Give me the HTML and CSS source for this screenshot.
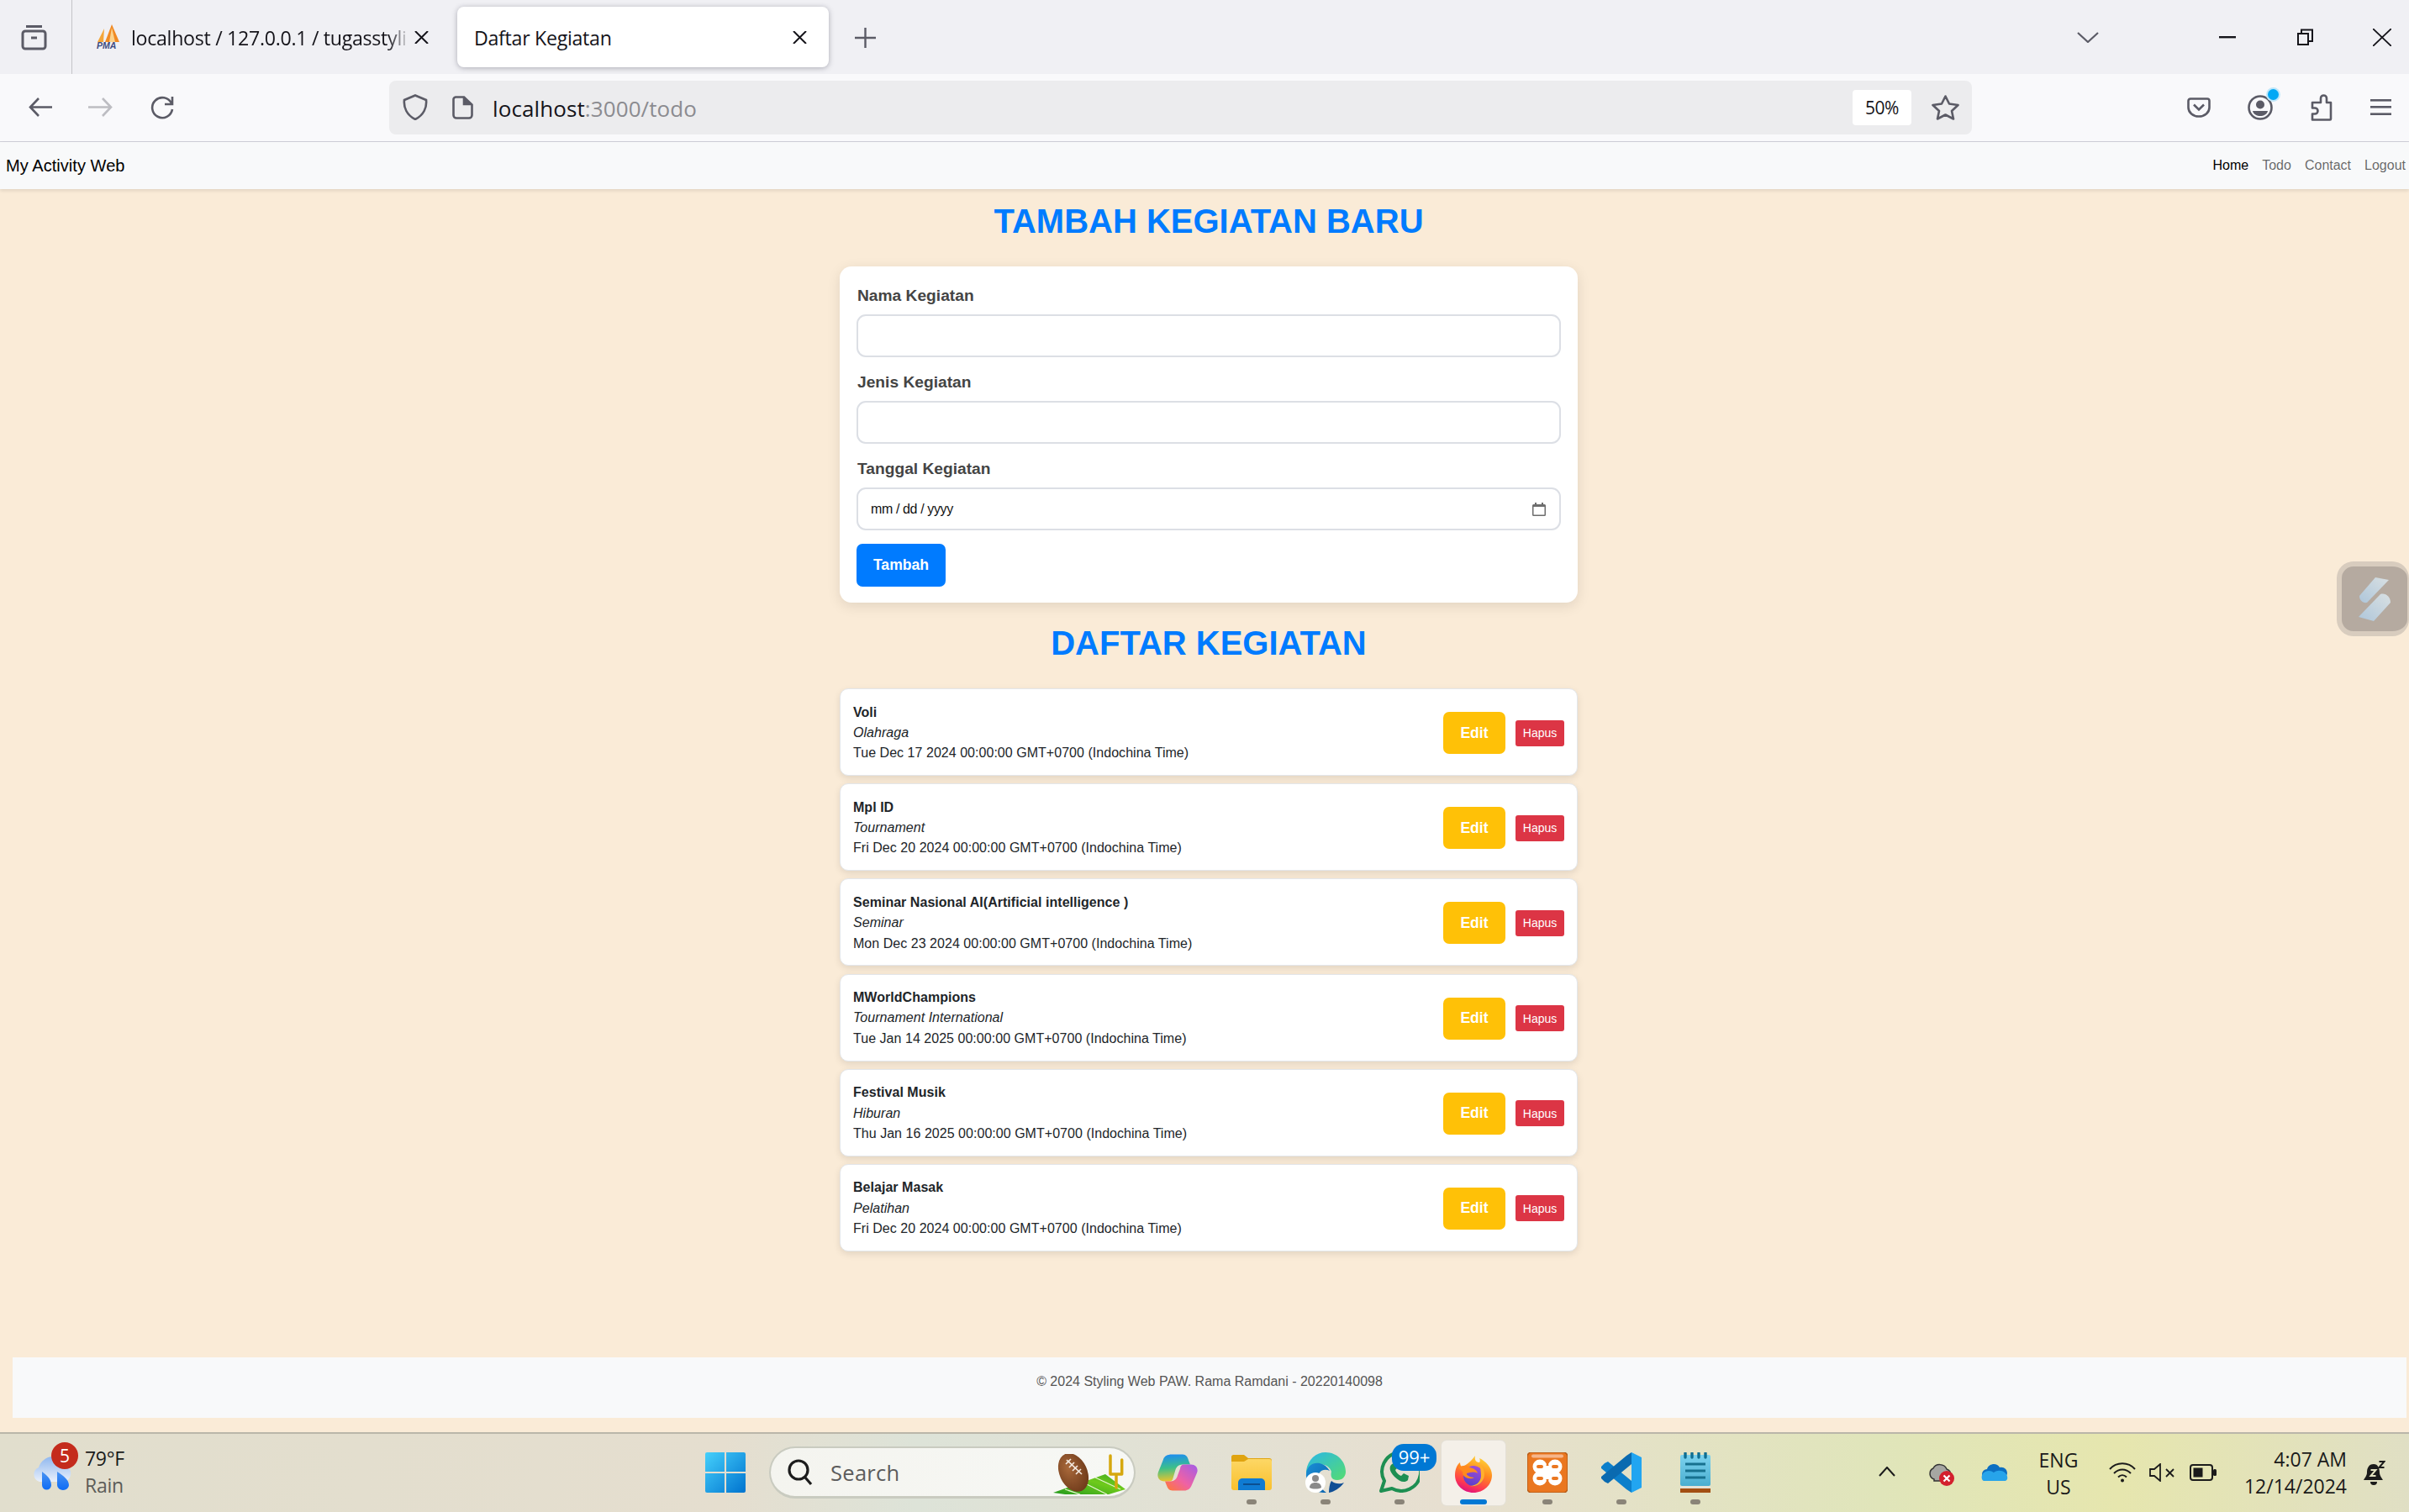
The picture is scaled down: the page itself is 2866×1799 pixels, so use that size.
FILE: index.html
```html
<!DOCTYPE html>
<html lang="id">
<head>
<meta charset="utf-8">
<title>Daftar Kegiatan</title>
<link rel="stylesheet" href="styles.css">
</head>
<body>
<div class="tabstrip">
  <svg class="ic-tabs" viewBox="0 0 31 31" fill="none" stroke="#5b5b66" stroke-width="3"><path d="M6 2.500h19"/><rect x="2" y="8" width="27" height="21" rx="3"/><path d="M12 16h7"/></svg>
  <div class="tab-sep"></div>
  <div class="tab">
    <svg class="ic-pma" viewBox="0 0 31 30"><path d="M2 21 10 5l-1 16z" fill="#f4a63a"/><path d="M11 21 19 0l9 21z" fill="#f08a24"/><path d="M16 21 19 4l4 17z" fill="#fbd38d"/><text x="1" y="29" class="pma-text">PMA</text></svg>
    <span class="tab-title tab-title-fade">localhost / 127.0.0.1 / tugasstyli</span>
    <svg class="ic-x" viewBox="0 0 17 15" stroke="#15141a" stroke-width="2" fill="none"><path d="M1 0l15 15M16 0 1 15"/></svg>
  </div>
  <div class="tab tab-active">
    <span class="tab-title">Daftar Kegiatan</span>
    <svg class="ic-x" viewBox="0 0 17 15" stroke="#15141a" stroke-width="2" fill="none"><path d="M1 0l15 15M16 0 1 15"/></svg>
  </div>
  <svg class="ic-plus" viewBox="0 0 25 24" stroke="#5b5b66" stroke-width="2.400" fill="none"><path d="M12.500 0v24M0 12h25"/></svg>
  <svg class="ic-chev" viewBox="0 0 26 13" stroke="#5b5b66" stroke-width="2.200" fill="none"><path d="M1 1l12 11L25 1"/></svg>
  <svg class="ic-min" viewBox="0 0 20 3"><rect width="20" height="2.400" fill="#15141a"/></svg>
  <svg class="ic-restore" viewBox="0 0 19 20" stroke="#15141a" stroke-width="2" fill="none"><rect x="1" y="6" width="12" height="13"/><path d="M5 6V1.500h13V15h-5"/></svg>
  <svg class="ic-close" viewBox="0 0 22 21" stroke="#15141a" stroke-width="1.800" fill="none"><path d="M0 0l22 21M22 0 0 21"/></svg>
</div>

<div class="toolbar">
  <svg class="ic-back" viewBox="0 0 28 23" stroke="#5b5b66" stroke-width="2.600" fill="none"><path d="M28 11.500H2M12 1 2 11.500 12 22"/></svg>
  <svg class="ic-fwd" viewBox="0 0 30 23" stroke="#bdbdc2" stroke-width="2.600" fill="none"><path d="M0 11.500h27M17 1l10 10.500L17 22"/></svg>
  <svg class="ic-reload" viewBox="0 0 30 28" stroke="#5b5b66" stroke-width="2.600" fill="none"><path d="M26 9A12 12 0 1 0 27 16"/><path d="M27 1v9h-9"/></svg>
  <div class="urlbar">
    <svg class="ic-shield" viewBox="0 0 30 31" stroke="#5b5b66" stroke-width="2.600" fill="none"><path d="M15 1.500 28 7c1 9-3 18-13 23C5 25 1 16 2 7z"/></svg>
    <svg class="ic-page" viewBox="0 0 25 28" stroke="#5b5b66" stroke-width="2.600" fill="none"><path d="M4 1.500h10l9.500 9V23a3.500 3.500 0 0 1-3.500 3.500H5A3.500 3.500 0 0 1 1.500 23V4A3 3 0 0 1 4 1.500z"/><path d="M14 1.500V10h9" fill="#5b5b66"/></svg>
    <span class="url"><span class="url-host">localhost</span>:3000/todo</span>
    <span class="zoom-pill">50%</span>
    <svg class="ic-star" viewBox="0 0 33 30" stroke="#5b5b66" stroke-width="2.600" fill="none" stroke-linejoin="round"><path d="M16.500 1.500 21 10.500l10.500 1.500-7.500 7 2 9.500-9.500-5-9.500 5 2-9.500-7.500-7L12 10.500z"/></svg>
  </div>
  <svg class="ic-pocket" viewBox="0 0 28 24" stroke="#5b5b66" stroke-width="2.600" fill="none"><path d="M4 1.500h20A2.500 2.500 0 0 1 26.500 4v8a12.500 10.500 0 0 1-25 0V4A2.500 2.500 0 0 1 4 1.500z"/><path d="M8 8.500l6 6 6-6"/></svg>
  <div class="account">
    <svg class="ic-account" viewBox="0 0 30 30"><circle cx="15" cy="15" r="13.500" fill="none" stroke="#5b5b66" stroke-width="2.600"/><circle cx="15" cy="11.500" r="5" fill="#5b5b66"/><path d="M6 19h18c-1 4-5 6-9 6s-8-2-9-6z" fill="#5b5b66"/></svg>
    <span class="account-dot"></span>
  </div>
  <svg class="ic-puzzle" viewBox="0 0 27 32" stroke="#5b5b66" stroke-width="2.600" fill="none" stroke-linejoin="round"><path d="M13 10V5a3.500 3.500 0 0 1 7 0v5h5v19.500a1 1 0 0 1-1 1H3v-7h3a3.500 3.500 0 0 0 0-7H3V10z"/></svg>
  <svg class="ic-menu" viewBox="0 0 25 19" fill="#5b5b66"><rect width="25" height="2.600"/><rect y="8" width="25" height="2.600"/><rect y="16.400" width="25" height="2.600"/></svg>
</div>

<nav class="navbar">
  <span class="brand">My Activity Web</span>
  <div class="nav-links">
    <a class="nav-link nav-current">Home</a>
    <a class="nav-link">Todo</a>
    <a class="nav-link">Contact</a>
    <a class="nav-link">Logout</a>
  </div>
</nav>

<main class="main">
  <div class="container">
    <h1 class="title">TAMBAH KEGIATAN BARU</h1>
    <form class="form-card">
      <label class="label">Nama Kegiatan</label>
      <input class="field" type="text">
      <label class="label">Jenis Kegiatan</label>
      <input class="field" type="text">
      <label class="label">Tanggal Kegiatan</label>
      <div class="field field-date">
        <span>mm / dd / yyyy</span>
        <svg class="ic-cal" viewBox="0 0 16 16"><path d="M3 0h2v2h6V0h2v2h1.500A1.500 1.500 0 0 1 16 3.500v11a1.500 1.500 0 0 1-1.500 1.500h-13A1.500 1.500 0 0 1 0 14.500v-11A1.500 1.500 0 0 1 1.500 2H3zM1.500 5v9.500h13V5z" fill="#6d6d6d"/></svg>
      </div>
      <button class="btn-add" type="button">Tambah</button>
    </form>
    <h2 class="title title-list">DAFTAR KEGIATAN</h2>
    <ul class="list">
      <li class="item"><div class="item-text"><strong>Voli</strong><em>Olahraga</em><span>Tue Dec 17 2024 00:00:00 GMT+0700 (Indochina Time)</span></div><button class="btn-edit" type="button">Edit</button><button class="btn-del" type="button">Hapus</button></li>
      <li class="item"><div class="item-text"><strong>Mpl ID</strong><em>Tournament</em><span>Fri Dec 20 2024 00:00:00 GMT+0700 (Indochina Time)</span></div><button class="btn-edit" type="button">Edit</button><button class="btn-del" type="button">Hapus</button></li>
      <li class="item"><div class="item-text"><strong>Seminar Nasional AI(Artificial intelligence )</strong><em>Seminar</em><span>Mon Dec 23 2024 00:00:00 GMT+0700 (Indochina Time)</span></div><button class="btn-edit" type="button">Edit</button><button class="btn-del" type="button">Hapus</button></li>
      <li class="item"><div class="item-text"><strong>MWorldChampions</strong><em>Tournament International</em><span>Tue Jan 14 2025 00:00:00 GMT+0700 (Indochina Time)</span></div><button class="btn-edit" type="button">Edit</button><button class="btn-del" type="button">Hapus</button></li>
      <li class="item"><div class="item-text"><strong>Festival Musik</strong><em>Hiburan</em><span>Thu Jan 16 2025 00:00:00 GMT+0700 (Indochina Time)</span></div><button class="btn-edit" type="button">Edit</button><button class="btn-del" type="button">Hapus</button></li>
      <li class="item"><div class="item-text"><strong>Belajar Masak</strong><em>Pelatihan</em><span>Fri Dec 20 2024 00:00:00 GMT+0700 (Indochina Time)</span></div><button class="btn-edit" type="button">Edit</button><button class="btn-del" type="button">Hapus</button></li>
    </ul>
  </div>
  <footer class="footer">© 2024 Styling Web PAW. Rama Ramdani - 20220140098</footer>
  <div class="ext-float">
    <svg class="ic-ext" viewBox="0 0 38 52"><defs><linearGradient id="extg" x1="0" y1="1" x2="1" y2="0"><stop offset="0" stop-color="#aec6da"/><stop offset="1" stop-color="#d9e0e2"/></linearGradient></defs><path d="M20 0 36 3 10 30C5 31 1 27 1 22z" fill="url(#extg)"/><path d="M18 52 0 47 26 20c6-2 12 3 12 10z" fill="url(#extg)"/></svg>
  </div>
</main>

<div class="taskbar">
  <div class="tb-weather">
    <div class="weather-icon">
      <svg class="ic-rain" viewBox="0 0 47 40"><defs><linearGradient id="cl" x1="0" y1="0" x2="0" y2="1"><stop offset="0" stop-color="#8fb7ef"/><stop offset="1" stop-color="#e9f0fb"/></linearGradient><linearGradient id="dr" x1="0" y1="0" x2="0" y2="1"><stop offset="0" stop-color="#4a93f2"/><stop offset="1" stop-color="#0d6cf5"/></linearGradient></defs><path d="M9 30a9 9 0 0 1-1-17C10 6 17 0 25 0c8 0 14 5 16 12 4 2 6 6 5 10-1 5-5 8-9 8z" fill="url(#cl)"/><path d="M12 18c5 4 11 8 11 16a5.500 5.500 0 0 1-11 0z" fill="url(#dr)"/><path d="M30 18c6 4 14 9 14 16a7 6 0 0 1-14 0z" fill="url(#dr)"/></svg>
      <span class="weather-badge">5</span>
    </div>
    <div class="weather-text"><span>79°F</span><span class="weather-sub">Rain</span></div>
  </div>
  <div class="cell">
    <svg class="ic-48" viewBox="0 0 46 46"><defs><linearGradient id="win" x1="0" y1="0" x2="1" y2="1"><stop offset="0" stop-color="#45d0fb"/><stop offset="1" stop-color="#0073cf"/></linearGradient></defs><path d="M2 0h20v22H0V2a2 2 0 0 1 2-2zM24 0h20a2 2 0 0 1 2 2v20H24zM0 24h22v22H2a2 2 0 0 1-2-2zM24 24h22v20a2 2 0 0 1-2 2H24z" fill="url(#win)"/></svg>
  </div>
  <div class="search">
    <svg class="ic-search" viewBox="0 0 30 32" fill="none" stroke="#1c1c1c" stroke-width="3.200"><circle cx="13" cy="13" r="11"/><path d="M21 22l7 8"/></svg>
    <span class="search-text">Search</span>
    <svg class="ic-football" viewBox="0 0 88 48"><defs><linearGradient id="fld" x1="0" y1="1" x2="1" y2="0"><stop offset="0" stop-color="#239a1e"/><stop offset=".6" stop-color="#6fca1c"/><stop offset="1" stop-color="#3ba722"/></linearGradient><radialGradient id="ball" cx=".4" cy=".35" r=".7"><stop offset="0" stop-color="#a8683a"/><stop offset="1" stop-color="#6e3a1a"/></radialGradient></defs><path d="M0 46 62 24 86 42 66 48H14z" fill="url(#fld)"/><path d="M14 42l18 6M36 34l28 14M50 28l30 14" stroke="#e6f5cf" stroke-width="1.300"/><path d="M68 2v22M81.700 7v17M68 24h13.700M75 24v16" stroke="#d6a80f" stroke-width="3.500" fill="none" stroke-linecap="round"/><ellipse cx="24" cy="22" rx="16.500" ry="24" transform="rotate(-25 24 22)" fill="url(#ball)"/><path d="M16 7l18 17M21 6l-6 6M25 10l-6 6M29 14l-6 6M33 18l-6 6" stroke="#f2e8de" stroke-width="1.700" fill="none"/></svg>
  </div>
  <div class="cell cell-first">
    <svg class="ic-48" viewBox="0 0 48 43"><defs><linearGradient id="co1" x1=".3" y1="0" x2=".4" y2="1"><stop offset="0" stop-color="#1c8cf2"/><stop offset=".5" stop-color="#3cc08a"/><stop offset="1" stop-color="#efc42a"/></linearGradient><linearGradient id="co2" x1="1" y1="0" x2="0" y2="1"><stop offset="0" stop-color="#a25ce8"/><stop offset=".55" stop-color="#ef62a4"/><stop offset="1" stop-color="#ff7a2e"/></linearGradient></defs><path d="M17 0H30C34 0 36 3 37 7L39 12H30C24 12 22 16 21 20L18 30C17 31 16 32 14 32H8C2 32-1 27 1 21L7 6C8 2 12 0 17 0z" fill="url(#co1)"/><path d="M31 12H40C46 12 49 17 47 22L41 36C39 41 36 43 32 43H18C14 43 12 40 11 37L9 32H16C20 32 23 29 24 25L27 17C27 14 29 12 31 12z" fill="url(#co2)"/></svg>
    <span class="dot dot-hidden"></span>
  </div>
  <div class="cell">
    <svg class="ic-48" viewBox="0 0 48 42"><defs><linearGradient id="fol" x1="0" y1="0" x2="0" y2="1"><stop offset="0" stop-color="#fdd765"/><stop offset="1" stop-color="#f9c02e"/></linearGradient></defs><path d="M0 2.500A2.500 2.500 0 0 1 2.500 0H15l5 4h25a3 3 0 0 1 3 3v7H0z" fill="#e0a410"/><path d="M0 8h15l5-3h25a3 3 0 0 1 3 3v31a3 3 0 0 1-3 3H3a3 3 0 0 1-3-3z" fill="url(#fol)"/><path d="M8 42V33a5 5 0 0 1 5-5h22a5 5 0 0 1 5 5v9z" fill="#0f7bd2"/><rect x="14" y="34" width="20" height="2" fill="#0b4f90"/></svg>
    <span class="dot"></span>
  </div>
  <div class="cell">
    <svg class="ic-48" viewBox="0 0 48 48"><defs><linearGradient id="ed" x1="0" y1="0" x2="1" y2="1"><stop offset="0" stop-color="#2bb7e8"/><stop offset="1" stop-color="#55dc70"/></linearGradient><linearGradient id="ed2" x1="0" y1="0" x2="1" y2="1"><stop offset="0" stop-color="#1a8fd6"/><stop offset="1" stop-color="#0b62ad"/></linearGradient></defs><path d="M1 22C3 8 13 0 24 0c14 0 24 11 24 23 0 6-4 10-10 10-8 0-8-6-7-10-2-6-8-10-15-8C10 17 5 22 1 30z" fill="url(#ed)"/><path d="M1 26c0-8 7-15 16-13 5 1 9 4 12 9-4-2-9-2-12 2-5 6-3 16 8 24-14 1-25-9-24-22z" fill="url(#ed2)"/><path d="M28 48c6-1 13-5 18-12-4 2-11 2-15-2-2 3-3 8-3 14z" fill="#0f4e95"/><circle cx="12" cy="36" r="12" fill="#fff"/><circle cx="12" cy="31" r="4" fill="#8a8a8a"/><path d="M5 42c0-4 3-6 7-6s7 2 7 6c-2 1-4 1.500-7 1.500s-5-.5-7-1.500z" fill="#8a8a8a"/></svg>
    <span class="dot"></span>
  </div>
  <div class="cell">
    <svg class="ic-48" viewBox="0 0 48 48" fill="none"><path d="M2 46l4-12A23 23 0 1 1 15 43z" stroke="#1e8f52" stroke-width="4" stroke-linejoin="round"/><path d="M15 14c-4 3-3 9 3 15 6 6 12 8 16 4l1-5-6-3-3 3c-3-1-6-4-7-7l3-3-3-6z" fill="#1e8f52"/></svg>
    <span class="wa-badge">99+</span>
    <span class="dot"></span>
  </div>
  <div class="cell cell-active">
    <svg class="ic-ff" viewBox="0 0 44 44"><defs><linearGradient id="ff" x1=".8" y1="0" x2=".4" y2="1"><stop offset="0" stop-color="#ffdf3a"/><stop offset=".45" stop-color="#ff8a1e"/><stop offset=".8" stop-color="#ff3b4e"/><stop offset="1" stop-color="#e0147c"/></linearGradient><linearGradient id="ffp" x1=".7" y1="0" x2=".3" y2="1"><stop offset="0" stop-color="#a24fd8"/><stop offset="1" stop-color="#5a3fc8"/></linearGradient></defs><path d="M24 0c-1 5 1 8 5 8 1-1 1-3 0-5 7 3 15 11 15 20 0 12-10 21-22 21S0 35 0 23C0 17 2 11 6 8c0 3 1 5 3 6 2-3 8-4 15-14z" fill="url(#ff)"/><circle cx="22" cy="24" r="12" fill="url(#ffp)"/><path d="M4 14c6-3 10-3 14 0 4 1 8 3 9 7-5-3-9-1-13 0-1 2 4 5 9 5-5 3-13 0-14-5 2-2-3-4-5-7z" fill="#ff8a1e"/><path d="M30 11c6 5 7 15 1 21-4 4-9 5-13 4 7 0 13-5 13-12 0-5-1-9-1-13z" fill="#ffb02c"/></svg>
    <span class="indicator"></span>
  </div>
  <div class="cell">
    <svg class="ic-48" viewBox="0 0 48 48"><rect width="48" height="48" rx="5" fill="#ea7720"/><rect width="48" height="48" rx="5" fill="none" stroke="#b75c17" stroke-width="1.500"/><rect x="5" y="2.500" width="38" height="4" rx="2" fill="#f6b58a"/><g fill="#fff"><circle cx="15" cy="17" r="8.500"/><circle cx="33" cy="17" r="8.500"/><circle cx="15" cy="31" r="8.500"/><circle cx="33" cy="31" r="8.500"/><rect x="12" y="15" width="24" height="18"/></g><g fill="#ea7720"><path d="M24 8.500 22.500 16h3z"/><path d="M24 39.500 22.500 32h3z"/><rect x="11" y="15" width="8" height="4" rx="2"/><rect x="29" y="15" width="8" height="4" rx="2"/><rect x="11" y="29" width="8" height="4" rx="2"/><rect x="29" y="29" width="8" height="4" rx="2"/></g></svg>
    <span class="dot"></span>
  </div>
  <div class="cell">
    <svg class="ic-48" viewBox="0 0 48 48"><path d="M36 34 8 11 4 13 0 17v2L30 44l6 4z" fill="#0c7fcb"/><path d="M36 0 30 4 0 29v2l4 4 4 2L36 14z" fill="#0a6ab0"/><path d="M36 0 48 6V42L36 48z" fill="#22a5f1"/></svg>
    <span class="dot"></span>
  </div>
  <div class="cell">
    <svg class="ic-note" viewBox="0 0 36 48"><defs><linearGradient id="nt" x1="0" y1="0" x2="0" y2="1"><stop offset="0" stop-color="#7cd2ee"/><stop offset="1" stop-color="#4aaed0"/></linearGradient></defs><rect y="3" width="36" height="37" rx="2" fill="url(#nt)"/><rect y="40" width="36" height="3" fill="#e6e2d6"/><rect y="43" width="36" height="5" fill="#a34f12"/><path d="M6 1v5M14 1v5M22 1v5M30 1v5" stroke="#0f6e92" stroke-width="3.400" stroke-linecap="round"/><path d="M6 14h24M6 22h24M6 30h24" stroke="#17718f" stroke-width="3"/></svg>
    <span class="dot"></span>
  </div>

  <svg class="tray-chev" viewBox="0 0 20 12" fill="none" stroke="#1b1b1b" stroke-width="2"><path d="M1 11 10 1l9 10"/></svg>
  <svg class="tray-cloud" viewBox="0 0 32 27"><path d="M8 19a7 7 0 0 1-1-13C10 0 20 0 23 7c3 1 5 4 5 8l-6 6H8z" fill="#a6a6a2" stroke="#333" stroke-width="1.500"/><circle cx="23" cy="18" r="9" fill="#d3202d"/><path d="M19.500 14.500l7 7M26.500 14.500l-7 7" stroke="#fff" stroke-width="2.200"/></svg>
  <svg class="tray-one" viewBox="0 0 32 21"><path d="M7 19a6 6 0 0 1 0-12c2-7 12-8 15-2 5-1 9 2 9 7-1 5-4 7-8 7z" fill="#0c6fc2"/><path d="M3 21c-3-1-4-8 2-11 4-2 8-1 11 2l12 9z" fill="#27a4ea"/><path d="M14 12c4-4 10-4 14-1 3 2 5 8 1 10H10z" fill="#27a4ea"/></svg>
  <div class="tray-lang"><span>ENG</span><span>US</span></div>
  <svg class="tray-wifi" viewBox="0 0 32 24" fill="none" stroke="#1b1b1b" stroke-width="2"><path d="M1 8c8-9 22-9 30 0M6 13c6-6 14-6 20 0M11 17.500c3-3 7-3 10 0"/><circle cx="16" cy="21.500" r="2" fill="#1b1b1b" stroke="none"/></svg>
  <svg class="tray-sound" viewBox="0 0 31 22" fill="none" stroke="#1b1b1b" stroke-width="1.800"><path d="M1 7h5l7-6v20l-7-6H1z"/><path d="M20 7l9 9M29 7l-9 9"/></svg>
  <svg class="tray-batt" viewBox="0 0 32 20"><rect x="1" y="1" width="26" height="18" rx="3" fill="none" stroke="#1b1b1b" stroke-width="2"/><rect x="4.500" y="4.500" width="11" height="11" fill="#1b1b1b"/><rect x="28" y="6" width="4" height="8" rx="1.500" fill="#1b1b1b"/></svg>
  <div class="tray-clock"><span>4:07 AM</span><span>12/14/2024</span></div>
  <svg class="tray-bell" viewBox="0 0 27 30"><path d="M13 4c-6 0-8 5-8 10 0 4-3 7-4 9h23c-1-2-4-5-4-9 0-5-2-10-7-10z" fill="#1b1b1b"/><path d="M9 25h8a4 4 0 0 1-8 0z" fill="#1b1b1b"/><path d="M9.500 11h6l-6 7h6" fill="none" stroke="#e3e2c0" stroke-width="2"/><path d="M19.500 1h6l-6 7h6" fill="none" stroke="#1b1b1b" stroke-width="2"/></svg>
</div>
</body>
</html>
```

FILE: styles.css
```css
* { box-sizing: border-box; }
html, body { margin: 0; padding: 0; }
body {
  width: 2866px;
  height: 1799px;
  overflow: hidden;
  display: flex;
  flex-direction: column;
  font-family: "Liberation Sans", Arial, sans-serif;
  background: #faebd7;
  position: relative;
}
svg { display: block; flex: none; }

/* browser chrome */
.tabstrip {
  height: 88px;
  flex: none;
  background: #f0f0f4;
  display: flex;
  align-items: center;
  font-family: "Open Sans", sans-serif;
}
.ic-tabs { width: 31px; height: 31px; margin-left: 25px; }
.tab-sep { width: 1px; height: 88px; background: #c4c4c8; margin-left: 29px; }
.tab { height: 72px; width: 458px; display: flex; align-items: center; padding-left: 28px; position: relative; }
.tab-active {
  width: 442px;
  padding-left: 20px;
  background: #fff;
  border-radius: 8px;
  box-shadow: 0 1px 6px rgba(40, 40, 60, .35);
}
.ic-pma { width: 31px; height: 30px; }
.pma-text { font: italic bold 10.500px "Liberation Sans", sans-serif; fill: #3c4a80; }
.tab-title { font-size: 23.200px; color: #15141a; white-space: nowrap; letter-spacing: -.3px; padding-top: 2px; }
.tab-title-fade {
  margin-left: 11px;
  width: 332px;
  overflow: hidden;
  -webkit-mask-image: linear-gradient(90deg, #000 92%, transparent);
  mask-image: linear-gradient(90deg, #000 92%, transparent);
}
.ic-x { width: 17px; height: 15px; margin-left: 5px; }
.tab-active .ic-x { margin-left: auto; margin-right: 26px; }
.ic-plus { width: 25px; height: 24px; margin: 2px 0 0 31px; }
.ic-chev { width: 26px; height: 13px; margin-left: 1429px; }
.ic-min { width: 20px; height: 3px; margin-left: 143px; }
.ic-restore { width: 19px; height: 20px; margin-left: 73px; }
.ic-close { width: 22px; height: 21px; margin-left: 71px; }

.toolbar {
  height: 81px;
  flex: none;
  background: #f9f9fb;
  border-bottom: 1px solid #cfcfd8;
  display: flex;
  align-items: center;
  padding-bottom: 1px;
}
.ic-back { width: 28px; height: 23px; margin-left: 34px; }
.ic-fwd { width: 30px; height: 23px; margin-left: 43px; }
.ic-reload { width: 30px; height: 28px; margin-left: 43px; }
.urlbar {
  width: 1883px;
  height: 64px;
  margin-left: 255px;
  background: #ececee;
  border-radius: 8px;
  display: flex;
  align-items: center;
  font-family: "Open Sans", sans-serif;
}
.ic-shield { width: 30px; height: 31px; margin-left: 16px; }
.ic-page { width: 25px; height: 28px; margin-left: 29px; }
.url { font-size: 26px; color: #8b8b90; margin-left: 23px; padding-top: 2px; letter-spacing: .1px; }
.url-host { color: #15141a; }
.zoom-pill {
  width: 70px;
  height: 42px;
  margin-left: auto;
  background: #fff;
  border-radius: 4px;
  font-size: 21px;
  color: #15141a;
  display: flex;
  align-items: center;
  justify-content: center;
  letter-spacing: -.5px;
}
.ic-star { width: 33px; height: 30px; margin-left: 24px; margin-right: 15px; }
.ic-pocket { width: 28px; height: 24px; margin-left: 256px; }
.account { width: 30px; height: 30px; margin-left: 44px; position: relative; }
.ic-account { width: 30px; height: 30px; }
.account-dot {
  position: absolute;
  right: -7px;
  top: -7px;
  width: 13px;
  height: 13px;
  border-radius: 50%;
  background: #00a8f5;
  box-shadow: 0 0 0 2px #bfe7fa;
}
.ic-puzzle { width: 27px; height: 32px; margin-left: 44px; }
.ic-menu { width: 25px; height: 19px; margin-left: 45px; }

.navbar {
  height: 56px;
  flex: none;
  background: #f8f9fa;
  display: flex;
  align-items: center;
  justify-content: space-between;
  padding: 0 4px 0 7px;
  box-shadow: 0 2px 4px rgba(0, 0, 0, .1);
  position: relative;
}
.brand { font-size: 20px; color: #000; letter-spacing: .05px; }
.nav-links { display: flex; gap: 16px; }
.nav-link { font-size: 16px; color: rgba(0, 0, 0, .6); }
.nav-current { color: #000; }

/* page */
.main {
  flex: 1;
  min-height: 0;
  display: flex;
  flex-direction: column;
  position: relative;
}
.container { width: 878px; margin-left: 999px; }
.title {
  margin: 14px 0 30px;
  height: 48px;
  line-height: 48px;
  font-size: 40px;
  font-weight: 700;
  color: #007bff;
  text-align: center;
  white-space: nowrap;
}
.title-list { margin-top: 24px; }
.form-card {
  background: #fff;
  border-radius: 14px;
  padding: 20px;
  box-shadow: 0 4px 16px rgba(0, 0, 0, .1);
  height: 400px;
}
.label {
  display: block;
  height: 30px;
  line-height: 30px;
  margin-bottom: 7px;
  padding-left: 1px;
  font-size: 19.200px;
  font-weight: 700;
  color: #444;
}
.field {
  display: block;
  width: 100%;
  height: 50.500px;
  margin: 0 0 15.500px;
  border: 2px solid #dcdfe5;
  border-radius: 11px;
  background: #fff;
  font: 16px "Liberation Sans", sans-serif;
}
.field-date {
  display: flex;
  align-items: center;
  justify-content: space-between;
  padding: 2px 16px 0 15px;
  color: #111;
  letter-spacing: -.38px;
  margin-bottom: 16px;
}
.ic-cal { width: 16px; height: 16px; }
.btn-add {
  display: block;
  width: 106px;
  height: 51px;
  border: 0;
  border-radius: 7px;
  background: #007bff;
  color: #fff;
  font: 700 17.600px "Liberation Sans", sans-serif;
}
.list { list-style: none; margin: 0; padding: 0; display: flex; flex-direction: column; gap: 9.200px; }
.item {
  height: 104px;
  background: #fff;
  border: 1px solid #e3e6ea;
  border-radius: 10px;
  box-shadow: 0 3px 8px rgba(0, 0, 0, .1);
  display: flex;
  align-items: center;
  padding: 2px 15px 0 15px;
}
.item-text { flex: 1; display: flex; flex-direction: column; font-size: 16px; line-height: 24.300px; color: #212529; letter-spacing: .035px; }
.item-text strong { font-weight: 700; }
.btn-edit {
  width: 74px;
  height: 50px;
  border: 0;
  border-radius: 7px;
  background: #ffc107;
  color: #fff;
  font: 700 17.600px "Liberation Sans", sans-serif;
}
.btn-del {
  width: 58px;
  height: 31px;
  margin-left: 12px;
  border: 0;
  border-radius: 3px;
  background: #dc3545;
  color: #fff;
  font: 14px "Liberation Sans", sans-serif;
  padding: 0;
}
.footer {
  margin: auto 0 17px 15px;
  width: 2848px;
  height: 72px;
  flex: none;
  padding-top: 17px;
  line-height: 24px;
  text-align: center;
  background: #f8f9fa;
  font-size: 16px;
  color: #555;
}
.ext-float {
  position: absolute;
  right: 0;
  top: 443px;
  width: 86px;
  height: 89px;
  border: 6px solid #d8ccbe;
  border-right-width: 2px;
  border-radius: 20px;
  background: #b5aaa0;
  display: flex;
  align-items: center;
  justify-content: center;
}
.ic-ext { width: 38px; height: 52px; }

/* taskbar */
.taskbar {
  height: 95px;
  flex: none;
  border-top: 2px solid #bab6a9;
  background: linear-gradient(90deg, #e1decd 0%, #e5decf 30%, #dde3d8 38%, #e7dfd0 60%, #e0e5ba 78%, #e6e6ae 88%, #e0dfc4 100%);
  display: flex;
  align-items: flex-start;
  font-family: "Open Sans", sans-serif;
  color: #1a1a1a;
}
.tb-weather { width: 819px; display: flex; padding: 27px 0 0 38px; flex: none; }
.weather-icon { width: 47px; height: 40px; position: relative; }
.ic-rain { width: 47px; height: 40px; }
.weather-badge {
  position: absolute;
  left: 23px;
  top: -17px;
  width: 32px;
  height: 32px;
  border-radius: 50%;
  background: #c42b1c;
  color: #fff;
  font-size: 21px;
  line-height: 32px;
  text-align: center;
}
.weather-text { display: flex; flex-direction: column; margin: -14px 0 0 16px; font-size: 23px; line-height: 32px; letter-spacing: -.3px; }
.weather-sub { color: #5c5c58; }
.cell {
  width: 88px;
  flex: none;
  display: flex;
  flex-direction: column;
  align-items: center;
  padding-top: 22px;
  position: relative;
}
.cell-first { margin-left: 6px; }
.ic-48 { width: 48px; height: 48px; }
.dot { width: 12px; height: 6px; margin-top: 8px; border-radius: 3px; background: #8a8478; }
.dot-hidden { visibility: hidden; }
.wa-badge {
  position: absolute;
  left: 35px;
  top: 12px;
  width: 53px;
  height: 32px;
  border-radius: 14px;
  background: #0078d4;
  color: #fff;
  font-size: 22px;
  line-height: 31px;
  text-align: center;
}
.cell-active {
  width: 76px;
  margin: 8px 6px 0;
  height: 77px;
  padding-top: 18px;
  background: #f4f0e9;
  border-radius: 6px;
  box-shadow: 0 0 0 1px #e4e0d6;
}
.ic-ff { width: 44px; height: 44px; }
.indicator { width: 32px; height: 6px; margin-top: 8px; border-radius: 3px; background: #0078d4; }
.search {
  width: 436px;
  height: 62px;
  margin: 15px 0 0 8px;
  border-radius: 31px;
  border: 2px solid #c9cbc0;
  border-bottom-width: 3px;
  background: linear-gradient(90deg, #f4f4ef, #f7f8f5);
  display: flex;
  align-items: center;
  padding-left: 20px;
  flex: none;
  overflow: hidden;
}
.ic-search { width: 30px; height: 32px; }
.search-text { font-size: 25.500px; color: #5c5c5c; margin-left: 21px; letter-spacing: .3px; }
.ic-football { width: 88px; height: 48px; margin: 5px 8px 0 auto; }
.ic-note { width: 36px; height: 48px; }
.tray-chev { width: 20px; height: 12px; margin: 39px 0 0 174px; }
.tray-cloud { width: 32px; height: 27px; margin: 35px 0 0 38px; }
.tray-one { width: 32px; height: 21px; margin: 35px 0 0 32px; }
.tray-lang { width: 60px; margin: 15px 0 0 30px; display: flex; flex-direction: column; align-items: center; font-size: 23px; line-height: 32px; }
.tray-wifi { width: 32px; height: 24px; margin: 34px 0 0 30px; }
.tray-sound { width: 31px; height: 22px; margin: 35px 0 0 16px; }
.tray-batt { width: 32px; height: 20px; margin: 36px 0 0 17px; }
.tray-clock { width: 130px; margin: 14px 0 0 25px; display: flex; flex-direction: column; align-items: flex-end; font-size: 23px; line-height: 32px; white-space: nowrap; }
.tray-bell { width: 27px; height: 30px; margin: 32px 0 0 19px; }
```
